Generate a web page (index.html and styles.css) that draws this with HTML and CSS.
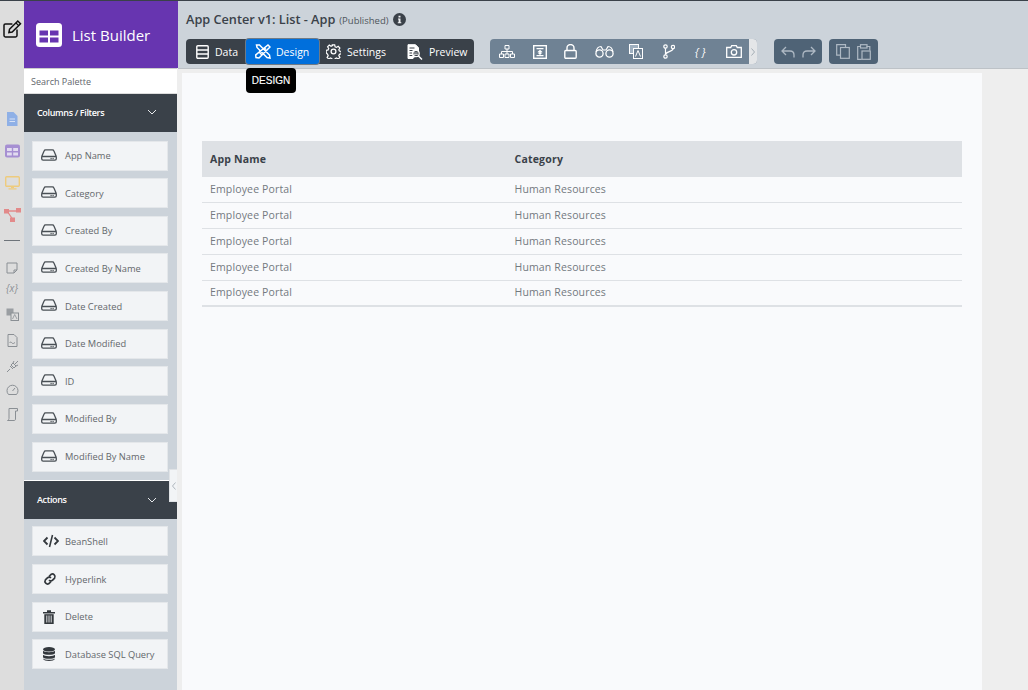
FILE: index.html
```html
<!DOCTYPE html>
<html lang="en">
<head>
<meta charset="utf-8">
<title>List Builder</title>
<link rel="stylesheet" href="styles.css">
</head>
<body>
<svg class="defs" width="0" height="0" aria-hidden="true">
  <symbol id="drive" viewBox="0 0 16 12"><path d="M.7 7.500 3.200 1.700C3.400 1.100 3.900.8 4.500.8h7c.6 0 1.100.3 1.300.9l2.500 5.800M.7 7.500v2.300c0 .8.6 1.400 1.400 1.400h11.800c.8 0 1.400-.6 1.400-1.400V7.500M.7 7.500h14.600" fill="none" stroke="currentColor" stroke-width="1.300"/><rect x="11.500" y="8.900" width="1.200" height="1.200" fill="currentColor"/><rect x="9.500" y="8.900" width="1.200" height="1.200" fill="currentColor"/></symbol>
</svg>
<div class="app">
  <nav class="rail">
    <svg class="rail-edit" width="20" height="20" viewBox="0 0 20 20"><path d="M15 10.500v6c0 .8-.6 1.400-1.400 1.400H3.400c-.8 0-1.400-.6-1.400-1.400V6.300c0-.8.6-1.400 1.400-1.400h7" fill="none" stroke="#111" stroke-width="1.500"/><path d="M7.500 10.300 15.800 2l2.700 2.700-8.300 8.300-3.300.6z" fill="none" stroke="#111" stroke-width="1.500"/><path d="M14 4l2.700 2.700" stroke="#111" stroke-width="1.200"/></svg>
    <div class="rail-main">
      <svg class="ri" width="14" height="14" viewBox="0 0 12 14"><path d="M1 0h6.500L11.500 4v10H1z" fill="#8fb0e6"/><path d="M3.500 7h5.500M3.500 9.500h5.500" stroke="#d8e2f5" stroke-width="1"/></svg>
      <svg class="ri" width="15" height="14" viewBox="0 0 15 13"><rect width="15" height="13" rx="2" fill="#a68fd2"/><path d="M2 3.500h4.800v3H2zM8.200 3.500H13v3H8.200zM2 8h4.800v3H2zM8.200 8H13v3H8.200z" fill="#e2dcf0"/></svg>
      <svg class="ri" width="15" height="14" viewBox="0 0 15 14"><rect x=".7" y=".7" width="13.600" height="9.600" rx="1" fill="none" stroke="#eecb7d" stroke-width="1.400"/><path d="M6 10.500h3v1.500H6zM3.500 12.300h8v1.200h-8z" fill="#eecb7d"/></svg>
      <svg class="ri" width="17" height="14" viewBox="0 0 17 14"><path d="M3 3h11M3 3l5.500 8" stroke="#e28a8a" stroke-width="1.300" fill="none"/><rect width="5" height="4.500" y="1" fill="#e28a8a"/><rect width="5" height="4.500" x="12" fill="#e28a8a"/><rect width="5" height="4.500" x="6" y="9.500" fill="#e28a8a"/></svg>
    </div>
    <div class="rail-rule"></div>
    <div class="rail-sub">
      <svg width="12" height="12" viewBox="0 0 12 12"><path d="M1 1h10v7l-3 3H1z M8 11V8h3" fill="none" stroke="#8a8f94"/></svg>
      <span class="rail-x">{x}</span>
      <svg width="13" height="13" viewBox="0 0 13 13"><rect x=".5" y=".5" width="7" height="7" fill="#9a9ea2"/><rect x="5" y="5" width="7.500" height="7.500" fill="#ddd" stroke="#8a8f94"/><path d="M6.500 11 8.700 6.500l2.300 4.500" fill="none" stroke="#8a8f94" stroke-width=".8"/></svg>
      <svg width="11" height="13" viewBox="0 0 11 13"><path d="M1 .5h6l3 3v9H1z M2.500 9c1-1.500 1.500-1 2.500 0s1.500.5 3-.5" fill="none" stroke="#8a8f94"/></svg>
      <svg width="13" height="13" viewBox="0 0 13 13"><path d="M1 12l3-3M4 6l3 3M5 5l2-2 3 3-2 2zM9 4l3-3M7 3l1-2M10 6l2-1" fill="none" stroke="#8a8f94"/></svg>
      <svg class="gauge" width="13" height="11" viewBox="0 0 13 11"><path d="M2.500 10.500a5.500 5.500 0 1 1 8 0zM6.500 7l2.500-3" fill="none" stroke="#8a8f94"/></svg>
      <svg width="12" height="13" viewBox="0 0 12 13"><path d="M3 .5h8.500V3h-2v8c0 1-.5 1.500-1.500 1.500H1.500C2.500 12 3 11.500 3 10.500z" fill="none" stroke="#8a8f94"/></svg>
    </div>
  </nav>

  <aside class="side">
    <div class="brand">
      <svg width="26" height="24" viewBox="0 0 26 24"><rect width="26" height="24" rx="3.500" fill="#fff"/><path d="M3.500 7.500h8.500v5H3.500zM14 7.500h8.500v5H14zM3.500 14.500h8.500v5H3.500zM14 14.500h8.500v5H14z" fill="#6735b0"/></svg>
      <span>List Builder</span>
    </div>
    <div class="search">Search Palette</div>
    <div class="sec-head"><span>Columns / Filters</span><svg width="10" height="6" viewBox="0 0 10 6"><path d="M1 1l4 4 4-4" fill="none" stroke="#e8eaec"/></svg></div>
    <ul class="items cols">
      <li><svg class="ic" width="16" height="12"><use href="#drive"/></svg>App Name</li>
      <li><svg class="ic" width="16" height="12"><use href="#drive"/></svg>Category</li>
      <li><svg class="ic" width="16" height="12"><use href="#drive"/></svg>Created By</li>
      <li><svg class="ic" width="16" height="12"><use href="#drive"/></svg>Created By Name</li>
      <li><svg class="ic" width="16" height="12"><use href="#drive"/></svg>Date Created</li>
      <li><svg class="ic" width="16" height="12"><use href="#drive"/></svg>Date Modified</li>
      <li><svg class="ic" width="16" height="12"><use href="#drive"/></svg>ID</li>
      <li><svg class="ic" width="16" height="12"><use href="#drive"/></svg>Modified By</li>
      <li><svg class="ic" width="16" height="12"><use href="#drive"/></svg>Modified By Name</li>
    </ul>
    <div class="sec-head actions"><span>Actions</span><svg width="10" height="6" viewBox="0 0 10 6"><path d="M1 1l4 4 4-4" fill="none" stroke="#e8eaec"/></svg></div>
    <ul class="items acts">
      <li><svg class="ic" width="16" height="14" viewBox="0 0 16 14"><path d="M4.500 3.500 1 7l3.500 3.500M11.500 3.500 15 7l-3.500 3.500" fill="none" stroke="#33383d" stroke-width="1.800"/><path d="M9.500 1 6.500 13" stroke="#33383d" stroke-width="1.600"/></svg>BeanShell</li>
      <li><svg class="ic" width="14" height="14" viewBox="0 0 14 14"><path d="M6 4.500 8 2.500a2.600 2.600 0 0 1 3.600 3.600L9.600 8.100a2.600 2.600 0 0 1-3.600 0M8 9.500 6 11.500a2.600 2.600 0 0 1-3.600-3.600L4.400 5.900a2.600 2.600 0 0 1 3.600 0" fill="none" stroke="#33383d" stroke-width="1.700"/></svg>Hyperlink</li>
      <li><svg class="ic" width="12" height="14" viewBox="0 0 12 14"><path d="M0 2h12v1.400H0zM4 .3h4V2H4z" fill="#33383d"/><path d="M1.300 4.200h9.400V14H1.300z" fill="#33383d"/><path d="M3.800 5.500v7M6 5.500v7M8.200 5.500v7" stroke="#f2f4f6" stroke-width=".9"/></svg>Delete</li>
      <li><svg class="ic" width="12" height="14" viewBox="0 0 12 14"><ellipse cx="6" cy="2.300" rx="6" ry="2.300" fill="#33383d"/><path d="M0 3.800c1 1.800 11 1.800 12 0v2.400c-1 2.200-11 2.200-12 0zM0 7.800c1 1.800 11 1.800 12 0v2.400c-1 2.200-11 2.200-12 0zM0 11.500c1 1.800 11 1.800 12 0v.3c-1 2.900-11 2.900-12 0z" fill="#33383d"/></svg>Database SQL Query</li>
    </ul>
    <div class="collapse"><svg width="4" height="8" viewBox="0 0 4 8"><path d="M3.500 .5.500 4l3 3.500" fill="none" stroke="#a8b0b8" stroke-width=".9"/></svg></div>
  </aside>

  <main class="main">
    <header class="top">
      <div class="title-row">
        <h1>App Center v1: List - App</h1>
        <small>(Published)</small>
        <svg width="13" height="13" viewBox="0 0 13 13"><circle cx="6.500" cy="6.500" r="6.500" fill="#3a4149"/><path d="M5.500 2.800h2v1.700h-2zM5 5.600h2.500v3.600h.8v1H4.800v-1h.8V6.600H5z" fill="#eef0f2"/></svg>
      </div>
      <div class="toolbar">
        <div class="tabs">
          <span class="tab t-data"><svg width="13" height="14" viewBox="0 0 13 14"><rect x=".8" y=".8" width="11.400" height="12.400" rx="1" fill="none" stroke="#fff" stroke-width="1.400"/><path d="M1 5h11M1 9h11" stroke="#fff" stroke-width="1.400"/></svg>Data</span>
          <span class="tab t-design"><svg width="16" height="15" viewBox="0 0 16 15"><path d="M1.500 1h3l10 10 .5 3-3-.5-10-10z M13 1l2 2-11 11-3-.5-.3-2.500z M6.500 10.500 4.500 8.500M11 5.500 9 3.500" fill="none" stroke="#fff" stroke-width="1.500"/></svg>Design</span>
          <span class="tab t-settings"><svg width="15" height="15" viewBox="0 0 15 15"><circle cx="7.500" cy="7.500" r="2.400" fill="none" stroke="#fff" stroke-width="1.300"/><path d="M6.300.8h2.400l.4 2 1.400.6 1.700-1.100 1.700 1.700-1.100 1.700.6 1.400 1.900.4v2.400l-1.900.4-.6 1.400 1.100 1.700-1.700 1.700-1.700-1.100-1.400.6-.4 1.900H6.300l-.4-1.900-1.400-.6-1.700 1.100-1.700-1.700 1.100-1.700-.6-1.400L.2 8.700V6.300l1.900-.4.6-1.400-1.100-1.700 1.700-1.700 1.700 1.100 1.400-.6z" fill="none" stroke="#fff" stroke-width="1.200"/></svg>Settings</span>
          <span class="tab t-preview"><svg width="16" height="16" viewBox="0 0 16 16"><path d="M1 .7h7.500l3 3v4.500L6 14.500H1z" fill="#fff" stroke="#fff"/><path d="M2.500 4h5M2.500 6.500h3M2.500 9h2.500M2.500 11.500h3" stroke="#3a4149"/><circle cx="9" cy="9.500" r="3.200" fill="#3a4149" stroke="#fff" stroke-width="1.300"/><path d="M6.800 9h4M6.800 10.500h4" stroke="#fff" stroke-width=".7"/><path d="M11.500 12l3.500 3.500" stroke="#fff" stroke-width="1.500"/></svg>Preview</span>
        </div>
        <div class="tools">
          <svg width="16" height="13" viewBox="0 0 16 13"><path d="M6 .5h4v3.500H6zM.5 9h4v3.500h-4zM6 9h4v3.500H6zM11.500 9h4v3.500h-4zM8 4v5M2.500 9V6.500h11V9" fill="none" stroke="#fff"/></svg>
          <svg width="14" height="14" viewBox="0 0 14 14"><rect x=".7" y=".7" width="12.600" height="12.600" fill="none" stroke="#fff" stroke-width="1.400"/><path d="M3.500 3h7v1.200h-7zM7 4.800 9.500 7H7.800v.6h1.700L7 10 4.500 7.600h1.700V7H4.500zM3.500 10h7v1.200h-7z" fill="#fff"/></svg>
          <svg width="13" height="15" viewBox="0 0 13 15"><rect x=".8" y="6.500" width="11.400" height="7.700" rx="1" fill="none" stroke="#fff" stroke-width="1.400"/><path d="M3 6.500V4a3.500 3.500 0 0 1 7 0v2.500" fill="none" stroke="#fff" stroke-width="1.400"/></svg>
          <svg width="19" height="13" viewBox="0 0 19 13"><circle cx="4.500" cy="8.500" r="3.600" fill="none" stroke="#fff" stroke-width="1.300"/><circle cx="14.500" cy="8.500" r="3.600" fill="none" stroke="#fff" stroke-width="1.300"/><path d="M1 7c.5-3 2-5.500 5-5.500l2 3.500h3l2-3.500c3 0 4.500 2.500 5 5.500" fill="none" stroke="#fff" stroke-width="1.200"/></svg>
          <svg class="translate" width="14" height="15" viewBox="0 0 14 15"><rect x=".5" y=".5" width="9" height="9" fill="#9fb0c0" stroke="#fff"/><rect x="4.500" y="4.500" width="9" height="10" fill="#6f8294" stroke="#fff"/><path d="M6.500 12.500 9 6.500l2.500 6" fill="none" stroke="#fff"/></svg>
          <svg width="12" height="15" viewBox="0 0 12 15"><circle cx="2.500" cy="2.500" r="1.700" fill="none" stroke="#fff" stroke-width="1.200"/><circle cx="2.500" cy="12.500" r="1.700" fill="none" stroke="#fff" stroke-width="1.200"/><circle cx="10" cy="3" r="1.700" fill="none" stroke="#fff" stroke-width="1.200"/><path d="M2.500 4.200v6.600M10 4.700C10 7.500 5 7 2.500 10" fill="none" stroke="#fff" stroke-width="1.200"/></svg>
          <span class="braces">{ }</span>
          <svg width="16" height="13" viewBox="0 0 16 13"><path d="M.7 2.500h4l1-1.800h4.600l1 1.800h4v9.800H.7z" fill="none" stroke="#fff" stroke-width="1.300"/><circle cx="8" cy="7.300" r="2.700" fill="none" stroke="#fff" stroke-width="1.300"/></svg>
          <span class="tools-more"><svg width="4" height="8" viewBox="0 0 4 8"><path d="M.5.500l3 3.500-3 3.500" fill="none" stroke="#a5adb5"/></svg></span>
        </div>
        <div class="undo">
          <svg width="14" height="12" viewBox="0 0 14 12"><path d="M5 1 1 5l4 4M1 5h8c2.500 0 4 1.500 4 4v2.500" fill="none" stroke="#aeb9c4" stroke-width="1.300"/></svg>
          <svg width="14" height="12" viewBox="0 0 14 12"><path d="M9 1l4 4-4 4M13 5H5C2.500 5 1 6.500 1 9v2.500" fill="none" stroke="#aeb9c4" stroke-width="1.300"/></svg>
        </div>
        <div class="clip">
          <svg width="14" height="15" viewBox="0 0 14 15"><path d="M9.500 3V.7H.7v10.500h3.300" fill="none" stroke="#aeb9c4" stroke-width="1.200"/><rect x="4.500" y="3.500" width="8.800" height="10.800" fill="none" stroke="#aeb9c4" stroke-width="1.200"/></svg>
          <svg width="14" height="16" viewBox="0 0 14 16"><path d="M4 2.500H.7v12.800h4M9.500 2.500h3.300v4" fill="none" stroke="#aeb9c4" stroke-width="1.200"/><rect x="3.500" y=".7" width="6.500" height="3.300" fill="none" stroke="#aeb9c4" stroke-width="1.200"/><rect x="5" y="7" width="8.300" height="8.300" fill="none" stroke="#aeb9c4" stroke-width="1.200"/></svg>
        </div>
      </div>
      <div class="tooltip">DESIGN</div>
    </header>
    <section class="stage">
      <div class="canvas">
        <table class="list">
          <thead><tr><th>App Name</th><th>Category</th></tr></thead>
          <tbody>
            <tr><td>Employee Portal</td><td>Human Resources</td></tr>
            <tr><td>Employee Portal</td><td>Human Resources</td></tr>
            <tr><td>Employee Portal</td><td>Human Resources</td></tr>
            <tr><td>Employee Portal</td><td>Human Resources</td></tr>
            <tr><td>Employee Portal</td><td>Human Resources</td></tr>
          </tbody>
        </table>
      </div>
    </section>
  </main>
</div>
</body>
</html>
```

FILE: styles.css
```css
* { box-sizing: border-box; }
html, body { margin: 0; height: 100%; overflow: hidden; }
body { font-family: "Open Sans", "Liberation Sans", sans-serif; background: #eee; color: #3a4149; }
.defs { display: block; height: 0; }
.app { display: flex; height: 690px; border-top: 1px solid #3a4149; }

.rail { width: 24px; flex: none; background: #ddd; display: flex; flex-direction: column; align-items: center; }
.rail-edit { margin: 18px 0 0; flex: none; }
.rail-main { display: flex; flex-direction: column; align-items: center; gap: 18px; margin-top: 73px; }
.rail-rule { width: 16px; height: 1px; background: #6e747a; margin: 18px 0 0; flex: none; }
.rail-sub { display: flex; flex-direction: column; align-items: center; gap: 13px; margin-top: 21px; }
.rail-x { font-style: italic; font-size: 10px; line-height: 12px; color: #8a8f94; height: 10px; margin: -5px 0 3px; }
.gauge { margin-top: -2px; }
.ri { display: block; }

.side { width: 154px; flex: none; background: #ccd3da; border-right: 1px solid #eee; position: relative; display: flex; flex-direction: column; }
.brand { height: 67px; margin-right: -1px; background: #6735b0; display: flex; align-items: center; padding-left: 12px; gap: 10px; color: #fff; font-size: 15px; flex: none; }
.search { height: 26px; background: #fff; border-top: 1px solid #ccc; border-bottom: 1px solid #ddd; font-size: 9px; line-height: 26px; padding-left: 7px; color: #5f666c; flex: none; }
.sec-head { height: 38px; background: #3a4149; color: #fff; display: flex; align-items: center; justify-content: space-between; padding: 0 20px 2px 13px; font-size: 9px; letter-spacing: -.35px; font-weight: 600; flex: none; }
.sec-head.actions { height: 39px; border-top: 1px solid #fff; margin-top: 8px; padding-bottom: 0; }
.items { list-style: none; margin: 0; padding: 8.500px 9px 0 8px; display: flex; flex-direction: column; gap: 7.650px; }
.acts { padding-top: 7.800px; }
.items li { height: 30px; background: #f2f4f6; border: 1px solid #e4e7ea; display: flex; align-items: center; font-size: 9.300px; color: #63676b; position: relative; padding-left: 32px; }
.ic { position: absolute; left: 8px; top: 50%; margin-top: -7px; color: #4a5056; }
.acts .ic { left: 10px; }
.collapse { position: absolute; right: 0; top: 468px; width: 8px; height: 33px; background: #f2f4f6; border: 1px solid #e0e3e6; border-right: 0; display: flex; align-items: center; justify-content: center; z-index: 2; }

.main { flex: 1; min-width: 0; display: flex; flex-direction: column; position: relative; }
.top { height: 68px; background: #ccd3da; border-bottom: 1px solid #bdc2c7; padding: 11px 0 0 8px; flex: none; position: relative; }
.title-row { display: flex; align-items: center; height: 15px; }
.title-row h1 { margin: 0; font-size: 12.700px; font-weight: 600; color: #3a4149; line-height: 15px; }
.title-row small { font-size: 9.500px; margin: 1px 4px 0 4px; color: #4f565c; }
.toolbar { display: flex; align-items: stretch; height: 25px; margin-top: 12px; }
.tabs { display: flex; align-items: center; width: 288px; background: #3a4149; border-radius: 4px; margin-right: 16px; color: #fff; font-size: 10.500px; position: relative; }
.tab { display: flex; align-items: center; height: 100%; }
.t-data { width: 60px; padding-left: 10px; gap: 6px; }
.t-design { width: 73px; padding-left: 9px; gap: 5px; background: #006fdc; border-radius: 3px; box-shadow: 0 0 0 1px #6f7a85; }
.t-settings { width: 84px; padding-left: 7px; gap: 6px; }
.t-preview { padding-left: 4px; gap: 6px; }
.tools { position: relative; width: 267px; background: #6f8294; border-radius: 4px; margin-right: 17px; display: flex; align-items: center; padding: 0 15px 0 9px; justify-content: space-between; overflow: hidden; }
.translate { margin-left: -2px; margin-right: 2px; }
.braces { color: #fff; font-style: italic; font-size: 11px; width: 16px; text-align: center; }
.tools-more { position: absolute; right: 0; top: 0; bottom: 0; width: 8px; background: #e4e6e8; display: flex; align-items: center; justify-content: center; }
.undo, .clip { display: flex; align-items: center; justify-content: space-around; background: #4f6376; border-radius: 4px; }
.undo { width: 48px; margin-right: 7px; padding: 0 3px; }
.clip { width: 49px; padding: 0 3px; }
.tooltip { position: absolute; left: 68px; top: 67px; width: 50px; height: 25px; background: #000; color: #fff; border-radius: 4px; font: 10px/25px "Liberation Sans", sans-serif; -webkit-text-stroke: .15px #fff; text-align: center; z-index: 3; }

.stage { flex: 1; padding: 4px 46px 0 4px; min-height: 0; }
.canvas { height: 100%; background: #f9fafc; padding: 68px 20px 0; }
.list { width: 100%; border-collapse: collapse; table-layout: fixed; border-bottom: 2px solid #dee1e5; }
.list th { height: 36px; background: #dee1e5; text-align: left; font-size: 10.500px; font-weight: 700; color: #3a4149; padding: 0 8px; letter-spacing: .2px; }
.list td { height: 25.750px; font-size: 10.500px; color: #73797f; padding: 0 8px 1px; border-bottom: 1px solid #dee1e5; letter-spacing: .15px; }
.list th:first-child, .list td:first-child { width: 304.500px; }
```
